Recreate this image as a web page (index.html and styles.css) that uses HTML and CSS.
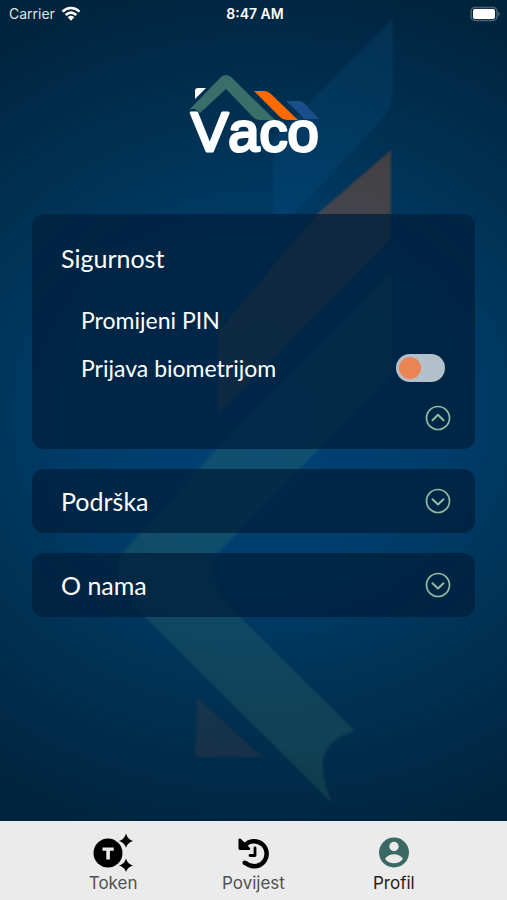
FILE: index.html
```
<!DOCTYPE html>
<html lang="hr">
<head>
<meta charset="utf-8">
<meta name="viewport" content="width=device-width, initial-scale=1">
<title>Vaco – Profil</title>
<link rel="stylesheet" href="styles.css">
</head>
<body>
<div class="app">
  <svg class="backdrop" viewBox="0 0 507 900" preserveAspectRatio="xMidYMin slice" aria-hidden="true">
    <path fill="#0a5a96" fill-opacity=".2" d="M393 18V95Q392 108 380 122L273 236V140Z"/>
    <path fill="#e86418" fill-opacity=".29" d="M391 150V238L218 414V332L317 214Z"/>
    <path fill="#3d796a" fill-opacity=".26" d="M392 270V374L220 551Q200 576 240 617L355 731Q322 740 323 767Q323 782 332 803L145 617Q105 575 122 553L212 454Z"/>
    <path fill="#d8562a" fill-opacity=".1" d="M197 697 262 757H195Z"/>
  </svg>

  <header class="status">
    <div class="carrier">
      <span>Carrier</span>
      <svg width="20" height="16" viewBox="0 0 20 16" fill="none" stroke="#fff" stroke-width="2.6" aria-hidden="true">
        <path d="M1.5 5.6C6.500.8 13.500.8 18.500 5.600M4.700 9C8 5.900 12 5.900 15.300 9"/>
        <path fill="#fff" stroke="none" d="M6.700 11.200Q10 8.500 13.300 11.200L10 14.700Z"/>
      </svg>
    </div>
    <time class="clock">8:47 AM</time>
    <div class="battery">
      <svg width="31" height="16" viewBox="0 0 31 16" aria-hidden="true">
        <rect x="1" y="1.500" width="26" height="13" rx="4" fill="none" stroke="#4c6478" stroke-width="1.500"/>
        <rect x="3" y="3" width="22" height="10" rx="2" fill="#fff"/>
        <path fill="#64798a" d="M28.500 5.500Q31 8 28.500 10.500Z"/>
      </svg>
    </div>
  </header>

  <main class="content">
    <svg class="logo" width="138" height="86" viewBox="0 0 138 86" role="img" aria-label="Vaco">
      <path fill="#fff" d="M10 17Q10 14 13 14H21L10 25Z"/>
      <path fill="#1b4f8b" d="M101 27H114Q117 27 119 29L134 45H120Z"/>
      <path fill="#ff6a00" d="M69 17H79Q83 17 86 20L113 46H102Q98 46 95 43Z"/>
      <path fill="#3a6f69" d="M4 36 36 3Q41-1 46 3L90 46H75Q71 46 68 43L41 15 15 39Q10 33 4 36Z"/>
      <text class="logo-word" x="6" y="77">Vaco</text>
    </svg>

    <section class="card card-open">
      <h2>Sigurnost</h2>
      <div class="options">
        <a class="option" href="#pin">Promijeni PIN</a>
        <label class="option"><span>Prijava biometrijom</span><input class="switch" type="checkbox" role="switch"></label>
      </div>
      <button class="toggle" type="button" aria-label="Zatvori Sigurnost">
        <svg width="26" height="26" viewBox="0 0 26 26" fill="none" stroke="#8dbba4" aria-hidden="true"><circle cx="13" cy="13" r="11.500" stroke-width="1.700"/><path stroke-width="2" stroke-linecap="round" stroke-linejoin="round" d="M7.500 15.200 13 9.800l5.500 5.400"/></svg>
      </button>
    </section>

    <section class="card">
      <h2>Podrška</h2>
      <button class="toggle" type="button" aria-label="Otvori Podrška">
        <svg width="26" height="26" viewBox="0 0 26 26" fill="none" stroke="#8dbba4" aria-hidden="true"><circle cx="13" cy="13" r="11.500" stroke-width="1.700"/><path stroke-width="2" stroke-linecap="round" stroke-linejoin="round" d="M7.500 11.200 13 16.500l5.500-5.300"/></svg>
      </button>
    </section>

    <section class="card">
      <h2>O nama</h2>
      <button class="toggle" type="button" aria-label="Otvori O nama">
        <svg width="26" height="26" viewBox="0 0 26 26" fill="none" stroke="#8dbba4" aria-hidden="true"><circle cx="13" cy="13" r="11.500" stroke-width="1.700"/><path stroke-width="2" stroke-linecap="round" stroke-linejoin="round" d="M7.500 11.200 13 16.500l5.500-5.300"/></svg>
      </button>
    </section>
  </main>

  <nav class="tabs">
    <a href="#token">
      <svg width="40" height="40" viewBox="0 0 40 40" aria-hidden="true">
        <circle cx="15" cy="21" r="14.500"/>
        <path fill="#ebebeb" d="M9.500 15.500h11.200v3.200h-3.800V27.500h-3.600v-8.800H9.500Z"/>
        <path stroke="#ebebeb" stroke-width="2" paint-order="stroke" d="M33 1.500Q34.500 7.500 40 9 34.500 10.500 33 16 31.500 10.500 26 9 31.500 7.500 33 1.500ZM33 26.500Q34.500 32 40 33.500 34.500 35 33 40 31.500 35 26 33.500 31.500 32 33 26.500Z"/>
      </svg>
      Token
    </a>
    <a href="#povijest">
      <svg width="40" height="40" viewBox="0 0 40 40" fill="none" stroke="#000" aria-hidden="true">
        <path stroke-width="4.500" d="M11.500 13.800A12.500 12.500 0 1 1 12.200 30.500"/>
        <path fill="#000" stroke="none" d="M5.500 7.500V16.500Q5.500 18 7 18H16.200Q18.200 17.500 17 16L8 7Q6 5.800 5.500 7.500Z"/>
        <circle cx="11.700" cy="30.800" r="2.300" fill="#000" stroke="none"/>
        <path stroke-width="2.800" stroke-linecap="round" stroke-linejoin="round" d="M22 16V23.500H17"/>
      </svg>
      Povijest
    </a>
    <a class="active" href="#profil" aria-current="page">
      <svg width="40" height="40" viewBox="0 0 40 40" aria-hidden="true">
        <circle cx="20" cy="20.500" r="15" fill="#3a6965"/>
        <circle cx="20" cy="14.500" r="4.700" fill="#ebebeb"/>
        <path fill="#ebebeb" d="M11 26.800C13 23.500 17 22.200 20 22.200S27 23.500 29 26.800C27 29.800 23.500 31.300 20 31.300S13 29.800 11 26.800Z"/>
      </svg>
      Profil
    </a>
  </nav>
</div>
</body>
</html>
```
FILE: styles.css
```
* {
  box-sizing: border-box;
}

body {
  margin: 0;
  color: #fff;
  font-family: Lato, "Noto Sans", sans-serif;
}

a {
  color: inherit;
  text-decoration: none;
}

.app {
  position: relative;
  isolation: isolate;
  display: flex;
  flex-direction: column;
  min-height: 100vh;
  overflow: hidden;
  background: radial-gradient(ellipse 100% 50% at 52% 46%, #004377 0%, #003d6b 35%, #003153 65%, #00243c 100%);
}

.backdrop {
  position: absolute;
  inset: 0;
  z-index: -1;
  width: 100%;
  height: 100%;
  filter: blur(1px);
}

.status {
  display: grid;
  grid-template-columns: 1fr auto 1fr;
  align-items: center;
  height: 27px;
  padding: 0 6px 0 9px;
  font: 14px/16px Inter, sans-serif;
}

.carrier {
  display: flex;
  align-items: center;
  gap: 6px;
  color: #dce4ea;
}

.clock {
  font-weight: 600;
}

.battery {
  display: flex;
  justify-content: flex-end;
}

.content {
  flex: 1;
  display: flex;
  flex-direction: column;
  gap: 20px;
  padding: 47px 32px 20px;
}

.logo {
  align-self: center;
  margin-bottom: 34px;
  overflow: visible;
}

.logo-word {
  fill: #fff;
  stroke: #fff;
  stroke-width: 3px;
  stroke-linejoin: round;
  font: 56px "Liberation Sans", sans-serif;
  font-kerning: none;
}

.card {
  display: flex;
  align-items: center;
  justify-content: space-between;
  min-height: 64px;
  padding: 0 24px 0 29px;
  border-radius: 12px;
  background: rgb(0 32 60 / 78%);
}

.card-open {
  flex-direction: column;
  align-items: stretch;
  padding-top: 28px;
  padding-bottom: 18px;
}

h2 {
  margin: 0;
  font-size: 25px;
  line-height: 32px;
  font-weight: 400;
}

.options {
  padding: 22px 6px 13px 20px;
}

.option {
  display: flex;
  align-items: center;
  justify-content: space-between;
  height: 48px;
  font-size: 23px;
}

.switch {
  appearance: none;
  width: 49px;
  height: 28px;
  margin: 0;
  padding: 3px;
  border-radius: 14px;
  background: #b3c0cc;
}

.switch::before {
  content: "";
  display: block;
  width: 22px;
  height: 22px;
  border-radius: 50%;
  background: #e98553;
}

.switch:checked::before {
  margin-left: auto;
}

.toggle {
  display: flex;
  align-self: flex-end;
  padding: 0;
  border: 0;
  background: none;
}

.card:not(.card-open) .toggle {
  align-self: center;
}

.tabs {
  display: flex;
  height: 79px;
  padding: 0 43px;
  background: #ebebeb;
  color: #515151;
  font: 17px/22px Inter, sans-serif;
}

.tabs a {
  flex: 1;
  display: flex;
  flex-direction: column;
  align-items: center;
  padding-top: 11px;
}

.tabs .active {
  color: #222;
}
```
